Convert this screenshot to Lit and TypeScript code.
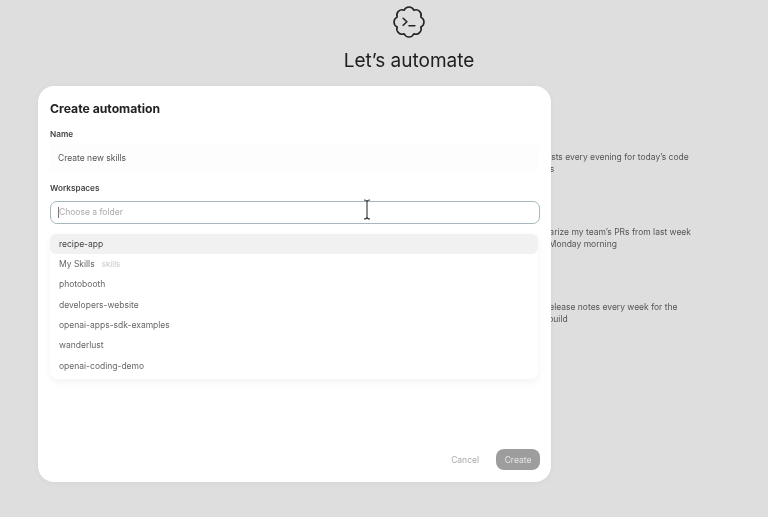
import { LitElement, html, css } from "lit";
import { customElement } from "lit/decorators.js";

@customElement("app-root")
export class AppRoot extends LitElement {
  static styles = css`
    :host {
      display: block;
      width: 768px;
      height: 517px;
      overflow: hidden;
      font-family: Inter, "Liberation Sans", sans-serif;
    }
    .page {
      position: relative;
      width: 768px;
      height: 517px;
      background: #dedede;
      overflow: hidden;
      filter: blur(0.45px);
    }
    .hero {
      display: flex;
      flex-direction: column;
      align-items: center;
      padding: 5px 0 0 50px;
    }
    .logo { width: 34px; height: 34px; display: block; }
    .title {
      margin-top: 9px;
      font-size: 19px;
      line-height: 26px;
      font-weight: 400;
      color: #202020;
    }
    .ideas {
      margin: 77px 0 0 524px;
      width: 172px;
      display: flex;
      flex-direction: column;
      gap: 51px;
    }
    .idea {
      font-size: 8.5px;
      line-height: 12px;
      color: #555;
    }
    .idea.first { margin-left: -4px; }
    .modal {
      position: absolute;
      left: 38px;
      top: 86px;
      width: 513px;
      height: 396px;
      box-sizing: border-box;
      background: #fff;
      border-radius: 16px;
      padding: 15px 12px 12px;
      display: flex;
      flex-direction: column;
      box-shadow: 0 1px 6px rgba(0, 0, 0, 0.04);
    }
    h2 {
      margin: 0;
      font-size: 12.2px;
      line-height: 16px;
      font-weight: 700;
      color: #222;
    }
    .label {
      margin-top: 11px;
      font-size: 8.2px;
      line-height: 12px;
      font-weight: 600;
      color: #444;
    }
    .name {
      margin-top: 5px;
      height: 26px;
      display: flex;
      align-items: center;
      padding-left: 8px;
      font-size: 8.5px;
      color: #555;
      background: #fdfdfd;
    }
    .label.ws { margin-top: 10.500px; }
    .field {
      margin-top: 7px;
      height: 23px;
      box-sizing: border-box;
      border: 1px solid #a6b8bb;
      border-radius: 7px;
      width: 490px;
      display: flex;
      align-items: center;
      padding-left: 7px;
      font-size: 8.5px;
      color: #aaa;
    }
    .caret { width: 1px; height: 11px; background: #777; }
    .list {
      margin-top: 10px;
      width: 488px;
      height: 145px;
      border-radius: 8px;
      box-shadow: 0 3px 8px rgba(0, 0, 0, 0.05);
      display: flex;
      flex-direction: column;
      font-size: 8.5px;
      color: #666;
      background: #fff;
    }
    .row {
      height: 20.350px;
      flex: none;
      display: flex;
      align-items: center;
      gap: 7px;
      padding-left: 9px;
      border-radius: 6px;
    }
    .row.on { background: #f1f1f1; color: #444; }
    .tag { color: #c8c8c8; font-size: 8px; }
    .footer {
      margin-top: auto;
      display: flex;
      justify-content: flex-end;
      align-items: center;
      gap: 17px;
      font-size: 8.5px;
    }
    .cancel { color: #aaa; }
    .create {
      width: 44px;
      height: 21px;
      border-radius: 8px;
      background: #9d9d9d;
      color: #e6e6e6;
      display: flex;
      align-items: center;
      justify-content: center;
      margin-right: -1px;
    }
    .ibeam {
      position: absolute;
      left: 363px;
      top: 199px;
      width: 8px;
      height: 21px;
    }
  `;

  render() {
    const rows = ["photobooth", "developers-website", "openai-apps-sdk-examples", "wanderlust", "openai-coding-demo"];
    return html`
      <div class="page">
        <div class="hero">
          <svg class="logo" viewBox="0 0 32 32" fill="none" stroke="#222" stroke-width="1.500" stroke-linecap="round" stroke-linejoin="round">
            <path d="M11.410 4.910A5 5 0 0 1 20.590 4.910A5 5 0 0 1 27.090 11.410A5 5 0 0 1 27.090 20.590A5 5 0 0 1 20.590 27.090A5 5 0 0 1 11.410 27.090A5 5 0 0 1 4.910 20.590A5 5 0 0 1 4.910 11.410A5 5 0 0 1 11.410 4.910z"/>
            <path d="M10.500 12.500l3.500 3.300-3.500 3.300M16 19.500h5.500"/>
          </svg>
          <div class="title">Let’s automate</div>
        </div>
        <div class="ideas">
          <div class="idea first">Write tests every evening for today’s code changes</div>
          <div class="idea">Summarize my team’s PRs from last week every Monday morning</div>
          <div class="idea">Draft release notes every week for the latest build</div>
        </div>
        <div class="modal">
          <h2>Create automation</h2>
          <div class="label">Name</div>
          <div class="name">Create new skills</div>
          <div class="label ws">Workspaces</div>
          <div class="field"><span class="caret"></span>Choose a folder</div>
          <div class="list">
            <div class="row on">recipe-app</div>
            <div class="row">My Skills <span class="tag">skills</span></div>
            ${rows.map((r) => html`<div class="row">${r}</div>`)}
          </div>
          <div class="footer">
            <span class="cancel">Cancel</span>
            <span class="create">Create</span>
          </div>
        </div>
        <svg class="ibeam" viewBox="0 0 8 21" fill="none" stroke="#333" stroke-width="1.100">
          <path d="M1 1c1.500 0 3 .5 3 2v15c0 1.500-1.500 2-3 2M7 1c-1.500 0-3 .5-3 2v15c0 1.500 1.500 2 3 2"/>
        </svg>
      </div>
    `;
  }
}
